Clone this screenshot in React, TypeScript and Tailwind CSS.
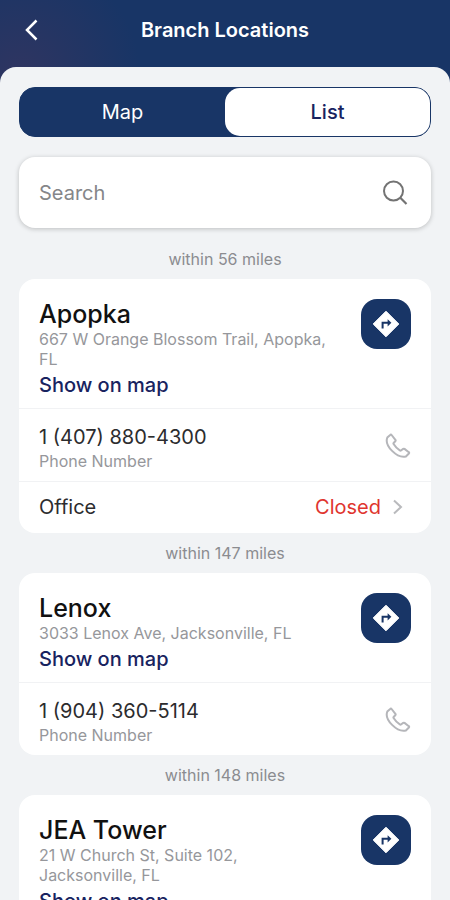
import React, { useState } from "react";

const branches = [
  {
    name: "Apopka",
    address: "667 W Orange Blossom Trail, Apopka, FL",
    phone: "1 (407) 880-4300",
    miles: 56,
    office: "Closed",
  },
  {
    name: "Lenox",
    address: "3033 Lenox Ave, Jacksonville, FL",
    phone: "1 (904) 360-5114",
    miles: 147,
  },
  {
    name: "JEA Tower",
    address: "21 W Church St, Suite 102, Jacksonville, FL",
    phone: "1 (904) 665-6000",
    miles: 148,
  },
];

const DirectionsIcon = () => (
  <svg width="28" height="28" viewBox="0 0 28 28" fill="none" aria-hidden="true">
    <path d="M14 1.2 26.8 14 14 26.8 1.2 14Z" fill="#fff" stroke="#fff" strokeLinejoin="round" />
    <path d="M10.6 18.5v-5.7h6" stroke="#183566" strokeWidth="2" />
    <path d="M15.6 9.2 19.4 12.8 15.6 16.4Z" fill="#183566" />
  </svg>
);

const PhoneIcon = () => (
  <svg width="26" height="26" viewBox="0 0 26 26" fill="none" aria-hidden="true">
    <path
      d="M5.2 1.900 2.300 4.600C.9 8.200 2.400 13.200 7.100 17.900c4.800 4.800 9.800 6.600 13.800 5.600l3-3c.4-.4.4-1-.1-1.300l-4.300-3.300c-.4-.3-.9-.3-1.300 0l-1.900 1.400c-.5.4-1 .4-1.500.1-2.600-1.600-4.700-3.800-6.200-6.300-.3-.5-.2-1 .2-1.400l1.500-1.500c.4-.4.4-.9.100-1.300L6.600 2c-.4-.5-1-.5-1.400-.1Z"
      stroke="#b5b6ba"
      strokeWidth="2"
      strokeLinejoin="round"
    />
  </svg>
);

const BranchCard = ({ branch }: { branch: any }) => {
  return (
    <article className="rounded-2xl bg-white">
      <div className="flex items-start justify-between gap-7 px-5 pt-5 pb-[11px]">
        <div>
          <h2 className="text-[25px] leading-[30px] font-medium text-[#111111]">
            {branch.name}
          </h2>
          <p className="text-base leading-5 text-[#96979b]">{branch.address}</p>
          <a href="#map" className="mt-1 block text-xl leading-6 font-medium text-[#18235f]">
            Show on map
          </a>
        </div>
        <button
          aria-label={`Directions to ${branch.name}`}
          className="flex size-[50px] shrink-0 items-center justify-center rounded-2xl bg-[#183566]"
        >
          <DirectionsIcon />
        </button>
      </div>
      <div className="flex items-start justify-between border-t border-[#f1f2f4] px-5 pt-4 pb-2">
        <div>
          <p className="text-xl leading-6 text-[#2c2c2e]">{branch.phone}</p>
          <p className="text-base leading-6 text-[#96979b]">Phone Number</p>
        </div>
        <button aria-label={`Call ${branch.name}`} className="mt-2">
          <PhoneIcon />
        </button>
      </div>
      {branch.office && (
        <button className="flex w-full items-center border-t border-[#f1f2f4] px-5 py-3 text-xl leading-[27px]">
          <span className="grow text-left text-[#2c2c2e]">Office</span>
          <span className="text-[#e0352f]">{branch.office}</span>
          <svg className="ml-3" width="18" height="18" viewBox="0 0 18 18" fill="none" aria-hidden="true">
            <path d="m1 1.500 7 6.500-7 6.500" stroke="#b9babd" strokeWidth="2" />
          </svg>
        </button>
      )}
    </article>
  );
};

const App: React.FC = () => {
  const [view, setView] = useState("list");
  const [search, setSearch] = useState("");

  const filteredBranches = branches.filter((branch) =>
    branch.name.toLowerCase().includes(search.toLowerCase())
  );

  return (
    <div className="flex h-screen flex-col bg-[#183566] bg-[radial-gradient(circle_at_20px_75px,#2f3561,#183566_120px)] font-['Inter',sans-serif]">
      <header className="grid h-[67px] shrink-0 grid-cols-[1fr_auto_1fr] items-center px-5 pb-2">
        <button aria-label="Back" className="w-6">
          <svg width="22" height="24" viewBox="0 0 22 24" fill="none" aria-hidden="true">
            <path d="M16.500 2.500 7 12l9.500 9.500" stroke="#fff" strokeWidth="2.500" />
          </svg>
        </button>
        <h1 className="text-xl font-semibold text-white">Branch Locations</h1>
      </header>

      <main className="grow overflow-y-auto rounded-t-2xl bg-[#f1f3f5] px-[19px] pt-5 [scrollbar-width:none]">
        <div className="flex h-[50px] rounded-2xl border border-[#183566] bg-[#183566] text-xl">
          <button
            onClick={() => setView("map")}
            className={
              view === "map"
                ? "flex-1 rounded-[15px] bg-white font-medium text-[#18235f]"
                : "flex-1 text-white"
            }
          >
            Map
          </button>
          <button
            onClick={() => setView("list")}
            className={
              view === "list"
                ? "flex-1 rounded-[15px] bg-white font-medium text-[#18235f]"
                : "flex-1 text-white"
            }
          >
            List
          </button>
        </div>

        <label className="mt-5 mb-[11px] flex h-[71px] items-center rounded-2xl bg-white px-5 shadow-[0_1px_5px_rgba(0,0,0,0.22)]">
          <input
            type="text"
            placeholder="Search"
            aria-label="Search"
            value={search}
            onChange={(e) => setSearch(e.target.value)}
            className="min-w-0 grow text-xl text-[#2c2c2e] outline-none placeholder:text-[#858689]"
          />
          <svg width="28" height="28" viewBox="0 0 28 28" fill="none" aria-hidden="true">
            <circle cx="10.500" cy="12" r="9.500" stroke="#737373" strokeWidth="2" />
            <path d="m17.300 18.800 6.200 6.200" stroke="#737373" strokeWidth="2.200" />
          </svg>
        </label>

        {filteredBranches.map((branch) => (
          <section key={branch.name}>
            <p className="text-center text-base leading-10 text-[#8b8c90]">
              within {branch.miles} miles
            </p>
            <BranchCard branch={branch} />
          </section>
        ))}
      </main>
    </div>
  );
};

export default App;
